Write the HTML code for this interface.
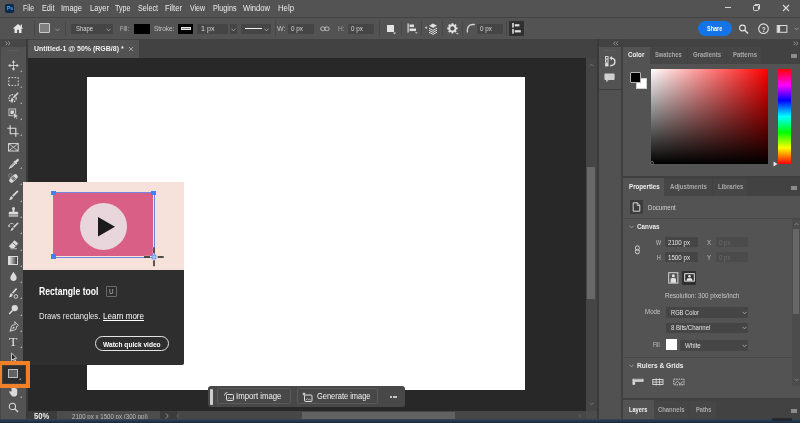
<!DOCTYPE html>
<html lang="en"><head><meta charset="utf-8"><title>Photoshop - Rectangle tool</title>
<style>
html,body{margin:0;padding:0}
body{width:800px;height:423px;overflow:hidden;background:#535353;position:relative;font-family:"Liberation Sans", sans-serif}
.a{position:absolute}
.t{position:absolute;white-space:nowrap;line-height:1;transform-origin:0 50%}
</style></head><body><div id="app" style="position:absolute;left:0;top:0;width:800px;height:423px;will-change:transform">
<div class="a" style="left:0px;top:0px;width:800px;height:17px;background:#535353;"></div>
<div class="a" style="left:0px;top:16.8px;width:800px;height:1.2px;background:#444444;"></div>
<div class="a" style="left:5px;top:4px;width:9px;height:9px;background:#0b2a4d;border-radius:2px;"></div>
<div class="t" style="left:6.6px;top:5.25px;font-size:6px;font-weight:700;color:#4fb0ff;transform:scaleX(0.8170);">Ps</div>
<div class="t" style="left:23px;top:4.00px;font-size:8.5px;font-weight:400;color:#ececec;transform:scaleX(0.8027);">File</div>
<div class="t" style="left:41.5px;top:4.00px;font-size:8.5px;font-weight:400;color:#ececec;transform:scaleX(0.8529);">Edit</div>
<div class="t" style="left:61px;top:4.00px;font-size:8.5px;font-weight:400;color:#ececec;transform:scaleX(0.8889);">Image</div>
<div class="t" style="left:90px;top:4.00px;font-size:8.5px;font-weight:400;color:#ececec;transform:scaleX(0.8935);">Layer</div>
<div class="t" style="left:115px;top:4.00px;font-size:8.5px;font-weight:400;color:#ececec;transform:scaleX(0.8407);">Type</div>
<div class="t" style="left:138px;top:4.00px;font-size:8.5px;font-weight:400;color:#ececec;transform:scaleX(0.8466);">Select</div>
<div class="t" style="left:165px;top:4.00px;font-size:8.5px;font-weight:400;color:#ececec;transform:scaleX(0.8999);">Filter</div>
<div class="t" style="left:190px;top:4.00px;font-size:8.5px;font-weight:400;color:#ececec;transform:scaleX(0.8205);">View</div>
<div class="t" style="left:212.5px;top:4.00px;font-size:8.5px;font-weight:400;color:#ececec;transform:scaleX(0.8426);">Plugins</div>
<div class="t" style="left:243px;top:4.00px;font-size:8.5px;font-weight:400;color:#ececec;transform:scaleX(0.8930);">Window</div>
<div class="t" style="left:278px;top:4.00px;font-size:8.5px;font-weight:400;color:#ececec;transform:scaleX(0.9151);">Help</div>
<div class="a" style="left:724.5px;top:6.9px;width:6.3px;height:1px;background:#d4d4d4;"></div>
<svg class="a" style="left:752px;top:3px;" width="9" height="9" viewBox="0 0 9 9"><rect x="1.5" y="2.5" width="5" height="5" rx="1" fill="none" stroke="#d8d8d8" stroke-width="1"/><path d="M3 2.5V1.5h4.5v4.5h-1" fill="none" stroke="#d8d8d8" stroke-width="1"/></svg>
<svg class="a" style="left:782px;top:4px;" width="8" height="8" viewBox="0 0 8 8"><path d="M1 1l6 6M7 1l-6 6" stroke="#dcdcdc" stroke-width="1.1" fill="none"/></svg>
<div class="a" style="left:0px;top:18px;width:800px;height:21px;background:#535353;"></div>
<div class="a" style="left:0px;top:38.5px;width:800px;height:1px;background:#3f3f3f;"></div>
<svg class="a" style="left:12px;top:23px;" width="12" height="11" viewBox="0 0 12 11"><path d="M6 1L0.8 5.6h1.7V10h2.6V6.8h1.8V10h2.6V5.6h1.7z" fill="#e6e6e6"/><rect x="8.6" y="1.6" width="1.3" height="3" fill="#e6e6e6"/></svg>
<div class="a" style="left:34px;top:21px;width:1px;height:15px;background:#464646;"></div>
<div class="a" style="left:39px;top:23px;width:9px;height:8px;background:#808080;border:1px solid #c9c9c9;border-radius:1px"></div>
<svg class="a" style="left:55px;top:27.5px;" width="5" height="4" viewBox="0 0 5 4"><path d="M0.5 0.8l2 2 2-2" stroke="#a0a0a0" stroke-width="0.9" fill="none"/></svg>
<div class="a" style="left:65px;top:21px;width:1px;height:15px;background:#464646;"></div>
<div class="a" style="left:71px;top:24px;width:42px;height:10px;background:#454545;border-radius:1px"></div>
<div class="t" style="left:76px;top:25.00px;font-size:7.5px;font-weight:400;color:#d6d6d6;transform:scaleX(0.7839);">Shape</div>
<svg class="a" style="left:106px;top:27.5px;" width="5" height="4" viewBox="0 0 5 4"><path d="M0.5 0.8l2 2 2-2" stroke="#a8a8a8" stroke-width="0.9" fill="none"/></svg>
<div class="t" style="left:120px;top:25.00px;font-size:7.5px;font-weight:400;color:#b8b8b8;transform:scaleX(0.7711);">Fill:</div>
<div class="a" style="left:133.5px;top:24px;width:16px;height:9.5px;background:#000;"></div>
<div class="t" style="left:154px;top:25.00px;font-size:7.5px;font-weight:400;color:#c4c4c4;transform:scaleX(0.8626);">Stroke:</div>
<div class="a" style="left:178px;top:24px;width:15px;height:9.5px;background:#000;"></div>
<div class="a" style="left:181px;top:26.600px;width:8.200px;height:1.600px;border:1px solid #e8e8e8;background:#8a8a8a;border-radius:0.500px;box-sizing:content-box"></div>
<div class="a" style="left:197px;top:24px;width:30.5px;height:10px;background:#454545;border-radius:1px"></div>
<div class="t" style="left:201px;top:25.00px;font-size:7.5px;font-weight:400;color:#d6d6d6;transform:scaleX(0.9515);">1 px</div>
<div class="a" style="left:229.5px;top:24px;width:7px;height:10px;background:#454545;border-radius:1px"></div>
<svg class="a" style="left:230.5px;top:27.5px;" width="5" height="4" viewBox="0 0 5 4"><path d="M0.5 0.8l2 2 2-2" stroke="#a8a8a8" stroke-width="0.9" fill="none"/></svg>
<div class="a" style="left:241px;top:24px;width:29.5px;height:10px;background:#454545;border-radius:1px"></div>
<div class="a" style="left:244.5px;top:28px;width:17.5px;height:1.3px;background:#f0f0f0;"></div>
<svg class="a" style="left:264px;top:27.5px;" width="5" height="4" viewBox="0 0 5 4"><path d="M0.5 0.8l2 2 2-2" stroke="#a8a8a8" stroke-width="0.9" fill="none"/></svg>
<div class="a" style="left:274.5px;top:21px;width:1px;height:15px;background:#464646;"></div>
<div class="t" style="left:277px;top:25.00px;font-size:7.5px;font-weight:400;color:#c4c4c4;transform:scaleX(0.9412);">W:</div>
<div class="a" style="left:288px;top:24px;width:26px;height:10px;background:#454545;border-radius:1px"></div>
<div class="t" style="left:291px;top:25.00px;font-size:7.5px;font-weight:400;color:#d6d6d6;transform:scaleX(0.8458);">0 px</div>
<svg class="a" style="left:320px;top:26px;" width="10" height="6" viewBox="0 0 10 6"><rect x="0.6" y="1" width="4.6" height="3.6" rx="1.8" fill="none" stroke="#bdbdbd" stroke-width="1"/><rect x="4.6" y="1" width="4.6" height="3.6" rx="1.8" fill="none" stroke="#bdbdbd" stroke-width="1"/></svg>
<div class="t" style="left:338px;top:25.00px;font-size:7.5px;font-weight:400;color:#a0a0a0;transform:scaleX(0.8667);">H:</div>
<div class="a" style="left:348px;top:24px;width:25.5px;height:10px;background:#454545;border-radius:1px"></div>
<div class="t" style="left:351px;top:25.00px;font-size:7.5px;font-weight:400;color:#d6d6d6;transform:scaleX(0.8458);">0 px</div>
<div class="a" style="left:379px;top:21px;width:1px;height:15px;background:#464646;"></div>
<div class="a" style="left:387px;top:25px;width:6.5px;height:6.5px;background:#e4e4e4;"></div>
<svg class="a" style="left:393px;top:32px;" width="3" height="3" viewBox="0 0 3 3"><path d="M0 0.5h3L1.5 2.6z" fill="#d0d0d0"/></svg>
<div class="a" style="left:401px;top:21px;width:1px;height:15px;background:#464646;"></div>
<svg class="a" style="left:407px;top:23px;" width="11" height="11" viewBox="0 0 11 11"><rect x="0.5" y="0.5" width="1.2" height="9" fill="#dedede"/><rect x="2.5" y="1.5" width="4.5" height="2.6" fill="#dedede"/><rect x="2.5" y="5.5" width="6.5" height="2.6" fill="#dedede"/><path d="M8 9.3h2.6L9.3 10.8z" fill="#d0d0d0"/></svg>
<div class="a" style="left:420.5px;top:21px;width:1px;height:15px;background:#464646;"></div>
<svg class="a" style="left:425px;top:23px;" width="13" height="12" viewBox="0 0 13 12"><path d="M1.2 3.4v2.4M0 4.6h2.4" stroke="#d8d8d8" stroke-width="0.8"/><path d="M8 0.6l4 2.2-4 2.2-4-2.2z" fill="#dedede"/><path d="M4 5.2l4 2.2 4-2.2M4 7.2l4 2.2 4-2.2M4 9.2l4 2.2 4-2.2" stroke="#dedede" stroke-width="1" fill="none"/></svg>
<div class="a" style="left:442px;top:21px;width:1px;height:15px;background:#464646;"></div>
<svg class="a" style="left:447px;top:23px;" width="12" height="12" viewBox="0 0 12 12"><g transform="translate(5.4,5.4)"><circle r="3.2" fill="none" stroke="#e2e2e2" stroke-width="2"/><g stroke="#e2e2e2" stroke-width="1.7"><path d="M0-5.2V-3M0 5.2V3M-5.2 0H-3M5.2 0H3M-3.7-3.7l1.5 1.5M3.7 3.7l-1.5-1.5M-3.7 3.7l1.5-1.5M3.7-3.7l-1.5 1.5"/></g></g><path d="M9 10h2.6L10.3 11.6z" fill="#d0d0d0"/></svg>
<div class="a" style="left:462px;top:21px;width:1px;height:15px;background:#464646;"></div>
<svg class="a" style="left:466px;top:23px;" width="10" height="10" viewBox="0 0 10 10"><path d="M1.4 9.5V6.5a5 5 0 0 1 5-5h2.4" fill="none" stroke="#d4d4d4" stroke-width="1.3"/></svg>
<div class="a" style="left:477px;top:24px;width:25.5px;height:10px;background:#454545;border-radius:1px"></div>
<div class="t" style="left:480px;top:25.00px;font-size:7.5px;font-weight:400;color:#d6d6d6;transform:scaleX(0.8458);">0 px</div>
<div class="a" style="left:506px;top:21px;width:1px;height:15px;background:#464646;"></div>
<div class="a" style="left:509px;top:21px;width:14.5px;height:15px;background:#303030;border-radius:1px"></div>
<svg class="a" style="left:510.5px;top:22px;" width="12" height="13" viewBox="0 0 12 13"><rect x="1.2" y="1" width="1.6" height="4.6" fill="#e2e2e2"/><rect x="3.8" y="2.2" width="4.6" height="2.2" fill="#e2e2e2"/><rect x="1.2" y="7" width="1.6" height="4.6" fill="#e2e2e2"/><rect x="3.8" y="8.2" width="6" height="2.2" fill="#e2e2e2"/></svg>
<div class="a" style="left:698.3px;top:21.2px;width:33.7px;height:14.8px;background:#1473e6;border-radius:7.5px"></div>
<div class="t" style="left:706.8px;top:25.00px;font-size:7.5px;font-weight:700;color:#ffffff;transform:scaleX(0.7287);">Share</div>
<svg class="a" style="left:738px;top:23px;" width="12" height="12" viewBox="0 0 12 12"><circle cx="4.5" cy="5" r="2.900" fill="none" stroke="#e4e4e4" stroke-width="1.100"/><path d="M6.700 7.200l3.300 3.300" stroke="#e4e4e4" stroke-width="1.400"/></svg>
<svg class="a" style="left:757px;top:22px;" width="13" height="13" viewBox="0 0 13 13"><circle cx="6.500" cy="6.700" r="4.800" fill="none" stroke="#e4e4e4" stroke-width="1.100"/></svg>
<div class="t" style="left:761.8px;top:25.75px;font-size:8px;font-weight:700;color:#e8e8e8;transform:scaleX(0.7361);">?</div>
<svg class="a" style="left:776px;top:24px;" width="12" height="10" viewBox="0 0 12 10"><rect x="1.200" y="1.500" width="9.700" height="6.800" fill="none" stroke="#dcdcdc" stroke-width="1"/><rect x="1.500" y="1.800" width="2.600" height="6.200" fill="#dcdcdc"/></svg>
<svg class="a" style="left:793.5px;top:27.3px;" width="5" height="4" viewBox="0 0 5 4"><path d="M0.5 0.8l2 2 2-2" stroke="#a0a0a0" stroke-width="0.9" fill="none"/></svg>
<div class="a" style="left:0px;top:39px;width:800px;height:18.5px;background:#424242;"></div>
<div class="a" style="left:28px;top:40px;width:110.5px;height:17.5px;background:#535353;"></div>
<div class="t" style="left:33.8px;top:44.75px;font-size:8px;font-weight:700;color:#f0f0f0;transform:scaleX(0.8753);">Untitled-1 @ 50% (RGB/8) *</div>
<svg class="a" style="left:127.5px;top:45.5px;" width="6" height="6" viewBox="0 0 6 6"><path d="M1 1l4 4M5 1l-4 4" stroke="#a8a8a8" stroke-width="0.9" fill="none"/></svg>
<div class="a" style="left:27px;top:57.5px;width:560px;height:353px;background:#282828;"></div>
<div class="a" style="left:87.2px;top:77.2px;width:438.3px;height:312.6px;background:#ffffff;"></div>
<div class="a" style="left:586px;top:57.5px;width:11px;height:353px;background:#454545;"></div>
<div class="a" style="left:587.2px;top:167px;width:8.3px;height:131.5px;background:#686868;"></div>
<svg class="a" style="left:589px;top:62.5px;" width="5" height="4" viewBox="0 0 5 4"><path d="M0.5 3.2l2-2 2 2" stroke="#7a7a7a" stroke-width="0.9" fill="none"/></svg>
<svg class="a" style="left:589px;top:402px;" width="5" height="4" viewBox="0 0 5 4"><path d="M0.5 0.8l2 2 2-2" stroke="#7a7a7a" stroke-width="0.9" fill="none"/></svg>
<div class="a" style="left:597px;top:39px;width:1.5px;height:381px;background:#3a3a3a;"></div>
<div class="a" style="left:27px;top:410.5px;width:570px;height:9.5px;background:#474747;"></div>
<div class="a" style="left:27px;top:410.5px;width:30px;height:9.5px;background:#3c3c3c;"></div>
<div class="a" style="left:57px;top:410.5px;width:103px;height:9.5px;background:#4c4c4c;"></div>
<div class="a" style="left:160px;top:410.5px;width:16.5px;height:9.5px;background:#3c3c3c;"></div>
<div class="t" style="left:34.2px;top:412.00px;font-size:8.5px;font-weight:700;color:#ededed;transform:scaleX(0.8992);">50%</div>
<div class="t" style="left:72.4px;top:413.00px;font-size:7.5px;font-weight:400;color:#bdbdbd;transform:scaleX(0.8163);">2100 px x 1500 px (300 ppi)</div>
<svg class="a" style="left:165px;top:412.5px;" width="4" height="6" viewBox="0 0 4 6"><path d="M0.8 0.5l2.4 2.5-2.4 2.5" stroke="#9a9a9a" stroke-width="0.9" fill="none"/></svg>
<svg class="a" style="left:176px;top:413.5px;" width="3" height="4" viewBox="0 0 3 4"><path d="M2.4 0.5L0.8 2l1.6 1.5" stroke="#6e6e6e" stroke-width="0.8" fill="none"/></svg>
<div class="a" style="left:302px;top:411.5px;width:153px;height:8.5px;background:#626262;"></div>
<div class="a" style="left:586px;top:410.5px;width:11px;height:9.5px;background:#4c4c4c;"></div>
<svg class="a" style="left:578px;top:413.5px;" width="3" height="4" viewBox="0 0 3 4"><path d="M0.8 0.5L2.4 2 0.8 3.5" stroke="#6e6e6e" stroke-width="0.8" fill="none"/></svg>
<div class="a" style="left:0px;top:39px;width:25.5px;height:381px;background:#535353;"></div>
<div class="a" style="left:0px;top:39px;width:1px;height:381px;background:#474747;"></div>
<div class="a" style="left:0px;top:39px;width:25.5px;height:7.5px;background:#474747;"></div>
<div class="a" style="left:25.5px;top:39px;width:2px;height:381px;background:#3a3a3a;"></div>
<svg class="a" style="left:4.5px;top:41px;" width="6" height="5" viewBox="0 0 6 5"><path d="M0.6 0.6l1.8 1.8-1.8 1.8M3.2 0.6l1.8 1.8-1.8 1.8" stroke="#b0b0b0" stroke-width="0.8" fill="none"/></svg>
<div class="a" style="left:7px;top:50px;width:11px;height:1px;background:#5d5d5d;"></div>
<svg class="a" style="left:7.5px;top:60.3px;" width="11" height="11" viewBox="0 0 14 14"><path d="M7 2v10M2 7h10" stroke="#dadada" stroke-width="1.100"/><path d="M7 0.200l2.300 2.900H4.700zM7 13.800l2.300-2.900H4.700zM0.200 7l2.900-2.300v4.600zM13.800 7l-2.900-2.300v4.600z" fill="#dadada"/></svg>
<svg class="a" style="left:19.8px;top:70.0px;" width="2" height="2" viewBox="0 0 2 2"><path d="M2 0v2H0z" fill="#a8a8a8"/></svg>
<svg class="a" style="left:7.5px;top:76.0px;" width="11" height="11" viewBox="0 0 14 14"><path d="M1 3.800V2h1.800M4.600 2h2M8.400 2h2M12.200 2H13v1.800M13 5.600v2M13 9.400V12h-0.800M10.400 12h-2M6.600 12h-2M2.800 12H1v-2.600M1 7.600v-2" fill="none" stroke="#dadada" stroke-width="1.200"/></svg>
<svg class="a" style="left:19.8px;top:85.7px;" width="2" height="2" viewBox="0 0 2 2"><path d="M2 0v2H0z" fill="#a8a8a8"/></svg>
<svg class="a" style="left:7.5px;top:92.1px;" width="11" height="11" viewBox="0 0 14 14"><circle cx="5.800" cy="8" r="4.600" fill="none" stroke="#dadada" stroke-width="1.500" stroke-dasharray="2 1.300"/><path d="M13.200 0.600c0.700 0.700 0.300 1.400-0.200 1.900L7.600 8.400 5.800 6.600 11.300 0.900c0.600-0.600 1.300-0.900 1.900-0.300z" fill="#dadada" stroke="#535353" stroke-width="0.500"/><path d="M5.200 7.400l1.800 1.800c0 1.800-1.400 3.200-4.200 3 0.900-0.800 0.900-1.600 1-2.600 0.100-1 0.600-1.900 1.400-2.200z" fill="#dadada"/></svg>
<svg class="a" style="left:19.8px;top:101.8px;" width="2" height="2" viewBox="0 0 2 2"><path d="M2 0v2H0z" fill="#a8a8a8"/></svg>
<svg class="a" style="left:7.5px;top:108.3px;" width="11" height="11" viewBox="0 0 14 14"><rect x="1.200" y="1.200" width="8.600" height="8.600" fill="none" stroke="#dadada" stroke-width="1"/><rect x="3.200" y="3.200" width="4.600" height="4.600" fill="#dadada"/><path d="M7 6.200l6.400 4.400-2.700 0.400 1.500 2.600-1.200 0.700-1.500-2.600-1.900 1.900z" fill="#dadada" stroke="#535353" stroke-width="0.600"/></svg>
<svg class="a" style="left:19.8px;top:118.0px;" width="2" height="2" viewBox="0 0 2 2"><path d="M2 0v2H0z" fill="#a8a8a8"/></svg>
<svg class="a" style="left:7px;top:124.5px;" width="12" height="12" viewBox="0 0 12 12"><path d="M3.200 0.300v8.500h8.500M0.300 3.200h8.500v8.500" fill="none" stroke="#dadada" stroke-width="1.100"/></svg>
<svg class="a" style="left:19.8px;top:134.2px;" width="2" height="2" viewBox="0 0 2 2"><path d="M2 0v2H0z" fill="#a8a8a8"/></svg>
<svg class="a" style="left:8px;top:142.5px;" width="11" height="9" viewBox="0 0 11 9"><rect x="0.600" y="0.600" width="9.600" height="7.400" fill="none" stroke="#dadada" stroke-width="1"/><path d="M0.600 0.600l9.600 7.400M10.200 0.600l-9.600 7.400" stroke="#dadada" stroke-width="0.800"/></svg>
<svg class="a" style="left:7.5px;top:157.5px;" width="11" height="11" viewBox="0 0 14 14"><path d="M11.900 0.700a1.900 1.900 0 0 1 1.400 3.200L11 6.200l0.700 0.700-1 1-0.700-0.700-5.200 5.200-2.300 0.800-0.900 0.900-0.700-0.700 0.900-0.900 0.800-2.300 5.200-5.200-0.700-0.700 1-1 0.700 0.700 2.200-2.200a1.900 1.900 0 0 1 0.900-0.600z" fill="#dadada"/><path d="M8.300 5.700L3.600 10.400l-0.300 0.800 0.800-0.300 4.700-4.700z" fill="#535353"/></svg>
<svg class="a" style="left:19.8px;top:167.2px;" width="2" height="2" viewBox="0 0 2 2"><path d="M2 0v2H0z" fill="#a8a8a8"/></svg>
<svg class="a" style="left:7.5px;top:173.0px;" width="11" height="11" viewBox="0 0 14 14"><g transform="rotate(-45 7 7)"><rect x="0.500" y="4" width="13" height="6" rx="3" fill="#dadada"/><rect x="5" y="4.800" width="4" height="4.400" fill="#535353"/><circle cx="6.200" cy="6.200" r="0.500" fill="#dadada"/><circle cx="7.800" cy="6.200" r="0.500" fill="#dadada"/><circle cx="6.200" cy="7.800" r="0.500" fill="#dadada"/><circle cx="7.800" cy="7.800" r="0.500" fill="#dadada"/></g><circle cx="3" cy="3.200" r="2.300" fill="none" stroke="#dadada" stroke-width="0.800" stroke-dasharray="1.200 1"/></svg>
<svg class="a" style="left:19.8px;top:182.7px;" width="2" height="2" viewBox="0 0 2 2"><path d="M2 0v2H0z" fill="#a8a8a8"/></svg>
<svg class="a" style="left:7.5px;top:190.1px;" width="11" height="11" viewBox="0 0 14 14"><path d="M12.800 0.800c0.800 0.800 0.300 1.500-0.300 2.100L6.800 8.600 5.200 7 10.900 1.300c0.600-0.600 1.300-1.100 1.900-0.500z" fill="#dadada"/><path d="M4.500 7.800l1.700 1.700c0 2-1.700 3.400-5 3.200 1.300-0.800 1.300-1.800 1.500-3 0.200-1 0.900-1.700 1.800-1.900z" fill="#dadada"/></svg>
<svg class="a" style="left:19.8px;top:199.79999999999998px;" width="2" height="2" viewBox="0 0 2 2"><path d="M2 0v2H0z" fill="#a8a8a8"/></svg>
<svg class="a" style="left:7.5px;top:206.5px;" width="11" height="11" viewBox="0 0 14 14"><path d="M5.300 1.200a1.900 1.900 0 0 1 3.400 0c0.400 0.900 0 1.800-0.400 2.600-0.400 0.900-0.300 2 0.400 2.400h3.300c0.600 0 1 0.400 1 1v2.300H1V7.200c0-0.600 0.400-1 1-1h3.300c0.700-0.400 0.800-1.500 0.400-2.400-0.400-0.800-0.800-1.700-0.400-2.600z" fill="#dadada"/><rect x="1" y="10.600" width="12" height="1.600" fill="#dadada"/></svg>
<svg class="a" style="left:19.8px;top:216.2px;" width="2" height="2" viewBox="0 0 2 2"><path d="M2 0v2H0z" fill="#a8a8a8"/></svg>
<svg class="a" style="left:7.5px;top:222.0px;" width="11" height="11" viewBox="0 0 14 14"><path d="M13 0.800c0.700 0.700 0.200 1.400-0.300 1.900L7.800 7.600 6.400 6.200l4.900-4.900c0.500-0.500 1.100-1 1.700-0.500z" fill="#dadada"/><path d="M5.800 7l1.400 1.400c0 1.700-1.400 2.900-4.200 2.700 1.100-0.700 1.100-1.500 1.300-2.500 0.100-0.800 0.700-1.400 1.500-1.600z" fill="#dadada"/><path d="M1 5.500a3.600 3.600 0 0 1 6-2.800" fill="none" stroke="#dadada" stroke-width="1"/><path d="M0 4.200l1 2.400 2-1.600z" fill="#dadada"/></svg>
<svg class="a" style="left:19.8px;top:231.7px;" width="2" height="2" viewBox="0 0 2 2"><path d="M2 0v2H0z" fill="#a8a8a8"/></svg>
<svg class="a" style="left:7.5px;top:239.1px;" width="11" height="11" viewBox="0 0 14 14"><path d="M8.200 1.500l4.800 4.200-5 5.800H3.500L1 9.300z" fill="#dadada"/><path d="M5.600 4.500l4.800 4.200" stroke="#535353" stroke-width="1"/><rect x="3" y="12" width="8.500" height="1" fill="#dadada"/></svg>
<svg class="a" style="left:19.8px;top:248.79999999999998px;" width="2" height="2" viewBox="0 0 2 2"><path d="M2 0v2H0z" fill="#a8a8a8"/></svg>
<div class="a" style="left:7.8px;top:256px;width:8.4px;height:7.4px;border:0.8px solid #dadada;background:linear-gradient(90deg,#e8e8e8,#3a3a3a);box-sizing:content-box"></div>
<svg class="a" style="left:19.8px;top:264.7px;" width="2" height="2" viewBox="0 0 2 2"><path d="M2 0v2H0z" fill="#a8a8a8"/></svg>
<svg class="a" style="left:7.5px;top:271.0px;" width="11" height="11" viewBox="0 0 14 14"><path d="M7 1C9 4 11 6.300 11 8.600A4 4 0 0 1 3 8.600C3 6.300 5 4 7 1z" fill="#dadada"/></svg>
<svg class="a" style="left:19.8px;top:280.7px;" width="2" height="2" viewBox="0 0 2 2"><path d="M2 0v2H0z" fill="#a8a8a8"/></svg>
<svg class="a" style="left:7.5px;top:287.5px;" width="11" height="11" viewBox="0 0 14 14"><path d="M11 0.600c0.800 0.800 0.300 1.500-0.300 2.100L6.500 7.400 5 5.900 9.200 1.100c0.600-0.600 1.200-1.100 1.800-0.500z" fill="#dadada"/><path d="M4.300 6.600l1.700 1.700c0 2-1.700 3.600-5 3.400 1.300-0.800 1.300-1.800 1.500-3 0.200-1 0.900-1.900 1.800-2.100z" fill="#dadada"/><circle cx="10" cy="10.800" r="2.300" fill="none" stroke="#dadada" stroke-width="1.200"/></svg>
<svg class="a" style="left:19.8px;top:297.2px;" width="2" height="2" viewBox="0 0 2 2"><path d="M2 0v2H0z" fill="#a8a8a8"/></svg>
<svg class="a" style="left:7.5px;top:304.0px;" width="11" height="11" viewBox="0 0 14 14"><circle cx="8.600" cy="5.200" r="4" fill="#dadada"/><path d="M6 8l-4.500 4.800" stroke="#dadada" stroke-width="1.800"/></svg>
<svg class="a" style="left:19.8px;top:313.7px;" width="2" height="2" viewBox="0 0 2 2"><path d="M2 0v2H0z" fill="#a8a8a8"/></svg>
<svg class="a" style="left:7.5px;top:320.5px;" width="11" height="11" viewBox="0 0 14 14"><path d="M8.500 0.800l4.700 4.700-1.200 1.200-0.800-0.300-1.200 4.400-7.500 2.400 2.400-7.500 4.400-1.200-0.300-0.800z" fill="none" stroke="#dadada" stroke-width="1.100"/><path d="M2.800 12.800l3.700-3.700" stroke="#dadada" stroke-width="0.900"/><circle cx="7.200" cy="8.300" r="1.100" fill="#dadada"/></svg>
<svg class="a" style="left:19.8px;top:330.2px;" width="2" height="2" viewBox="0 0 2 2"><path d="M2 0v2H0z" fill="#a8a8a8"/></svg>
<svg class="a" style="left:6px;top:334px;" width="14" height="16" viewBox="0 0 14 16"></svg>
<div class="t" style="left:9px;top:335.25px;font-size:13px;font-weight:400;color:#e0e0e0;transform:scaleX(1.0562);font-family:&quot;Liberation Serif&quot;,serif;">T</div>
<svg class="a" style="left:19.8px;top:346.2px;" width="2" height="2" viewBox="0 0 2 2"><path d="M2 0v2H0z" fill="#a8a8a8"/></svg>
<svg class="a" style="left:7.5px;top:352.0px;" width="11" height="11" viewBox="0 0 14 14"><path d="M4.500 1.500l6.500 6.300-3 0.200 1.900 3.700-1.300 0.700-1.900-3.700-2.200 2z" fill="#1e1e1e" stroke="#e4e4e4" stroke-width="1.100" stroke-linejoin="round"/></svg>
<div class="a" style="left:2px;top:365px;width:24px;height:19px;background:#3e3e3e;z-index:5"></div>
<div class="a" style="left:3.3px;top:366.2px;width:21.5px;height:16.7px;background:#2e2e2e;z-index:5"></div>
<div class="a" style="left:8px;top:369.200px;width:10.100px;height:8.700px;background:#626262;border:0.900px solid #bcbcbc;box-sizing:border-box;z-index:6"></div>
<svg class="a" style="left:19.4px;top:378.3px;z-index:6;" width="2" height="2" viewBox="0 0 2 2"><path d="M2 0v2H0z" fill="#a8a8a8"/></svg>
<div class="a" style="left:-1.600px;top:361.400px;width:31.600px;height:26.500px;border:4.100px solid #f0812a;box-sizing:border-box;z-index:7"></div>
<svg class="a" style="left:7.5px;top:386.0px;" width="11" height="11" viewBox="0 0 14 14"><path d="M4.500 7V2.800a0.900 0.900 0 0 1 1.800 0V6.500 1.800a0.900 0.900 0 0 1 1.800 0V6.500 2.500a0.900 0.900 0 0 1 1.800 0V7 4.200a0.900 0.900 0 0 1 1.800 0V9.500c0 2.500-1.500 4-4 4-2 0-3-0.800-4-2.500L1.600 8c-0.500-0.900 0.600-1.700 1.400-0.900z" fill="#dadada"/></svg>
<svg class="a" style="left:19.8px;top:395.7px;" width="2" height="2" viewBox="0 0 2 2"><path d="M2 0v2H0z" fill="#a8a8a8"/></svg>
<svg class="a" style="left:7.5px;top:401.5px;" width="11" height="11" viewBox="0 0 14 14"><circle cx="5.600" cy="5.600" r="4" fill="none" stroke="#dadada" stroke-width="1.300"/><path d="M8.600 8.600l4.200 4.200" stroke="#dadada" stroke-width="1.600"/></svg>
<div class="a" style="left:23.3px;top:182px;width:160.4px;height:87.7px;background:#f6e1db;"></div>
<div class="a" style="left:23.3px;top:269.7px;width:160.4px;height:95.8px;background:#2e2e2e;border-radius:0 0 2px 2px"></div>
<div class="a" style="left:53.3px;top:192.7px;width:100.2px;height:63.6px;background:#d95f87;"></div>
<div class="a" style="left:52.600px;top:192.200px;width:100.100px;height:63.400px;border:1.200px solid #6f86e2;box-sizing:content-box"></div>
<div class="a" style="left:80px;top:202.500px;width:47px;height:47px;border-radius:50%;background:#e9d6dd"></div>
<svg class="a" style="left:96px;top:214.5px;" width="22" height="24" viewBox="0 0 22 24"><path d="M2 2l17 9.800L2 21.600z" fill="#1d1a1c"/></svg>
<div class="a" style="left:51.1px;top:190.5px;width:4.8px;height:4.8px;background:#4280f4;"></div>
<div class="a" style="left:151.2px;top:190.5px;width:4.8px;height:4.8px;background:#4280f4;"></div>
<div class="a" style="left:51.1px;top:253.9px;width:4.8px;height:4.8px;background:#4280f4;"></div>
<svg class="a" style="left:142.2px;top:244.7px;" width="24" height="24" viewBox="0 0 24 24"><path d="M12 2.300v6M12 15.300v6M2 12h6M15.700 12h6" stroke="#f6e1db" stroke-width="2.600" opacity="0.700"/><path d="M12 2.300v6M12 15.300v6M2 12h6M15.700 12h6" stroke="#1c1c1c" stroke-width="1.400"/><rect x="10.200" y="10.200" width="3.600" height="3.600" fill="#d4e6ff" stroke="#5a9cf0" stroke-width="1"/><rect x="11.600" y="11.600" width="0.800" height="0.800" fill="#223"/></svg>
<div class="t" style="left:38.7px;top:286.75px;font-size:10px;font-weight:700;color:#ffffff;transform:scaleX(0.8635);">Rectangle tool</div>
<div class="a" style="left:106.200px;top:286px;width:8.800px;height:8.800px;border:1px solid #6a6a6a;border-radius:1px;box-sizing:content-box"></div>
<div class="t" style="left:109.2px;top:288.25px;font-size:7px;font-weight:700;color:#909090;transform:scaleX(0.8889);">U</div>
<div class="t" style="left:38.7px;top:312.00px;font-size:8.5px;font-weight:400;color:#e6e6e6;transform:scaleX(0.9011);">Draws rectangles.</div>
<div class="t" style="left:103px;top:312.00px;font-size:8.5px;font-weight:400;color:#ffffff;transform:scaleX(0.9432);text-decoration:underline;text-decoration-thickness:0.700px;text-underline-offset:1px;">Learn more</div>
<div class="a" style="left:95px;top:336.200px;width:71.600px;height:12.600px;border:1.100px solid #e4e4e4;border-radius:8px;box-sizing:content-box"></div>
<div class="t" style="left:103px;top:340.75px;font-size:8px;font-weight:700;color:#ffffff;transform:scaleX(0.8236);">Watch quick video</div>
<div class="a" style="left:207.6px;top:386.3px;width:197px;height:21.2px;background:#484848;border-radius:3px"></div>
<div class="a" style="left:210.3px;top:388.6px;width:2.3px;height:16.2px;background:#cfcfcf;border-radius:1px"></div>
<div class="a" style="left:217.2px;top:388.3px;width:74.3px;height:16.2px;background:#484848;border-radius:2px;border:1px solid #5b5b5b;box-sizing:border-box"></div>
<div class="a" style="left:296.5px;top:388.3px;width:81.7px;height:16.2px;background:#484848;border-radius:2px;border:1px solid #5b5b5b;box-sizing:border-box"></div>
<svg class="a" style="left:223.5px;top:392px;" width="10" height="9" viewBox="0 0 10 9"><rect x="2.500" y="2.500" width="7" height="6" rx="1" fill="none" stroke="#e0e0e0" stroke-width="1"/><path d="M3.500 7.500l1.800-2 1.400 1.400 1-0.800 1.300 1.400" fill="none" stroke="#e0e0e0" stroke-width="0.700"/><path d="M0.500 3.500a3 3 0 0 1 3-3" fill="none" stroke="#e0e0e0" stroke-width="0.900"/></svg>
<div class="t" style="left:236px;top:392.00px;font-size:8.5px;font-weight:400;color:#f2f2f2;transform:scaleX(0.9151);">Import image</div>
<svg class="a" style="left:302px;top:391.5px;" width="11" height="10" viewBox="0 0 11 10"><rect x="2.500" y="3" width="7.500" height="6.500" rx="1" fill="none" stroke="#e0e0e0" stroke-width="1"/><path d="M3.500 8.500l1.800-2 1.400 1.400 1-0.800 1.300 1.400" fill="none" stroke="#e0e0e0" stroke-width="0.700"/><path d="M2 0l0.600 1.400L4 2l-1.400 0.600L2 4l-0.600-1.400L0 2l1.400-0.600z" fill="#f0f0f0"/></svg>
<div class="t" style="left:317px;top:392.00px;font-size:8.5px;font-weight:400;color:#f2f2f2;transform:scaleX(0.8777);">Generate image</div>
<div class="a" style="left:389.7px;top:395.800px;width:2px;height:2px;border-radius:50%;background:#ececec"></div>
<div class="a" style="left:392.55px;top:395.800px;width:2px;height:2px;border-radius:50%;background:#ececec"></div>
<div class="a" style="left:395.4px;top:395.800px;width:2px;height:2px;border-radius:50%;background:#ececec"></div>
<div class="a" style="left:598.5px;top:39px;width:201.5px;height:7.5px;background:#424242;"></div>
<svg class="a" style="left:612.5px;top:41px;" width="6" height="5" viewBox="0 0 6 5"><path d="M2.400 0.600L0.600 2.400l1.800 1.800M5 0.600L3.200 2.400 5 4.200" stroke="#a8a8a8" stroke-width="0.800" fill="none"/></svg>
<svg class="a" style="left:792.5px;top:41px;" width="6" height="5" viewBox="0 0 6 5"><path d="M0.600 0.600l1.800 1.800-1.800 1.800M3.200 0.600l1.800 1.800-1.800 1.800" stroke="#a8a8a8" stroke-width="0.800" fill="none"/></svg>
<div class="a" style="left:598.5px;top:46.5px;width:22.5px;height:42.5px;background:#535353;"></div>
<div class="a" style="left:598.5px;top:89px;width:22.5px;height:1px;background:#3e3e3e;"></div>
<div class="a" style="left:598.5px;top:90px;width:22.5px;height:330px;background:#515151;"></div>
<div class="a" style="left:621px;top:39px;width:2px;height:381px;background:#404040;"></div>
<div class="a" style="left:604px;top:50px;width:11px;height:1px;background:#5d5d5d;"></div>
<svg class="a" style="left:604.5px;top:55.5px;" width="11" height="11" viewBox="0 0 11 11"><rect x="0.500" y="0.500" width="2.600" height="2.400" fill="none" stroke="#d8d8d8" stroke-width="0.900"/><rect x="0.500" y="3.800" width="2.600" height="2.400" fill="none" stroke="#d8d8d8" stroke-width="0.900"/><rect x="0.100" y="7.100" width="3.400" height="3.300" fill="#dcdcdc"/><path d="M5.200 9.700c3.200 0 4.700-1.900 4.700-4.100S8.400 2 6.400 2.100" fill="none" stroke="#dcdcdc" stroke-width="1.400"/><path d="M4.300 2.300l2.700-2.200v4.200z" fill="#dcdcdc"/></svg>
<svg class="a" style="left:604.3px;top:73px;" width="11" height="10" viewBox="0 0 11 10"><path d="M1.200 0.500h8.600a0.800 0.800 0 0 1 0.800 0.800v4.800a0.800 0.800 0 0 1-0.800 0.800H4.600L2.300 9.300V6.900H1.200a0.800 0.800 0 0 1-0.800-0.800V1.300a0.800 0.800 0 0 1 0.800-0.800z" fill="#d0d0d0"/></svg>
<div class="a" style="left:623px;top:46.5px;width:177px;height:17px;background:#424242;"></div>
<div class="a" style="left:623px;top:46.5px;width:26.5px;height:17px;background:#535353;"></div>
<div class="a" style="left:649.5px;top:47px;width:37.2px;height:16.5px;background:#464646;"></div>
<div class="a" style="left:687.5px;top:47px;width:38.7px;height:16.5px;background:#464646;"></div>
<div class="a" style="left:727px;top:47px;width:34.2px;height:16.5px;background:#464646;"></div>
<div class="t" style="left:628.4px;top:51.00px;font-size:7.5px;font-weight:700;color:#f2f2f2;transform:scaleX(0.8370);">Color</div>
<div class="t" style="left:655.3px;top:51.00px;font-size:7.5px;font-weight:700;color:#a9a9a9;transform:scaleX(0.7715);">Swatches</div>
<div class="t" style="left:693.2px;top:51.00px;font-size:7.5px;font-weight:700;color:#a9a9a9;transform:scaleX(0.8025);">Gradients</div>
<div class="t" style="left:732.6px;top:51.00px;font-size:7.5px;font-weight:700;color:#a9a9a9;transform:scaleX(0.7996);">Patterns</div>
<div class="a" style="left:790.6px;top:53.7px;width:6px;height:4px;background:#8c8c8c;"></div>
<div class="a" style="left:623px;top:63.5px;width:177px;height:111.5px;background:#535353;"></div>
<div class="a" style="left:636px;top:78px;width:11px;height:11px;background:#ffffff;border:0.500px solid #cfcfcf;box-sizing:border-box"></div>
<div class="a" style="left:629.500px;top:72px;width:11.500px;height:11px;background:#000;border:0.800px solid #b4b4b4;box-sizing:border-box;border-radius:1px"></div>
<div class="a" style="left:651px;top:68.500px;width:117px;height:95px;background:linear-gradient(to top,#000,rgba(0,0,0,0)),linear-gradient(to right,#fff,#ff0000)"></div>
<div class="a" style="left:650px;top:160.500px;width:4px;height:4px;border:0.800px solid #707070;border-radius:50%;box-sizing:border-box"></div>
<div class="a" style="left:778px;top:68.500px;width:12.500px;height:95px;background:linear-gradient(to bottom,#ff0000 0%,#ff00ff 17%,#0000ff 33%,#00ffff 50%,#00ff00 67%,#ffff00 83%,#ff0000 100%)"></div>
<svg class="a" style="left:772.5px;top:160.5px;" width="5" height="6" viewBox="0 0 5 6"><path d="M0.500 0.500l4 2.500-4 2.500z" fill="#e8e8e8"/></svg>
<div class="a" style="left:623px;top:176.2px;width:177px;height:1.8px;background:#3f3f3f;"></div>
<div class="a" style="left:623px;top:178px;width:177px;height:17.5px;background:#424242;"></div>
<div class="a" style="left:623px;top:178px;width:41px;height:17.5px;background:#535353;"></div>
<div class="a" style="left:664px;top:178.5px;width:47.7px;height:17px;background:#464646;"></div>
<div class="a" style="left:712.5px;top:178.5px;width:34.7px;height:17px;background:#464646;"></div>
<div class="t" style="left:628.8px;top:183.00px;font-size:7.5px;font-weight:700;color:#f2f2f2;transform:scaleX(0.8246);">Properties</div>
<div class="t" style="left:670.3px;top:183.00px;font-size:7.5px;font-weight:700;color:#a9a9a9;transform:scaleX(0.8124);">Adjustments</div>
<div class="t" style="left:718px;top:183.00px;font-size:7.5px;font-weight:700;color:#a9a9a9;transform:scaleX(0.7984);">Libraries</div>
<div class="a" style="left:790.6px;top:185.7px;width:6px;height:4px;background:#8c8c8c;"></div>
<div class="a" style="left:623px;top:195.5px;width:177px;height:201.5px;background:#535353;"></div>
<div class="a" style="left:629.5px;top:200px;width:13.5px;height:13.5px;background:#3c3c3c;border-radius:1px"></div>
<svg class="a" style="left:632px;top:202px;" width="9" height="10" viewBox="0 0 9 10"><path d="M1.200 0.800h4.200l2.400 2.400v6H1.200z" fill="none" stroke="#e8e8e8" stroke-width="0.900"/><path d="M5.200 0.800v2.600h2.600" fill="none" stroke="#e8e8e8" stroke-width="0.800"/></svg>
<div class="t" style="left:648px;top:204.00px;font-size:7.5px;font-weight:400;color:#d2d2d2;transform:scaleX(0.8102);">Document</div>
<div class="a" style="left:623px;top:218px;width:177px;height:1px;background:#474747;"></div>
<svg class="a" style="left:628.5px;top:224.5px;" width="5" height="4" viewBox="0 0 5 4"><path d="M0.500 0.800l2 2 2-2" stroke="#a8a8a8" stroke-width="0.900" fill="none"/></svg>
<div class="t" style="left:637.4px;top:223.00px;font-size:7.5px;font-weight:700;color:#ececec;transform:scaleX(0.8468);">Canvas</div>
<div class="t" style="left:655.6px;top:239.00px;font-size:7.5px;font-weight:400;color:#c4c4c4;transform:scaleX(0.7048);">W</div>
<div class="a" style="left:664.5px;top:237px;width:33.5px;height:10px;background:#454545;border-radius:1px"></div>
<div class="t" style="left:667.5px;top:239.00px;font-size:7.5px;font-weight:400;color:#e4e4e4;transform:scaleX(0.8239);">2100 px</div>
<div class="t" style="left:707.2px;top:239.00px;font-size:7.5px;font-weight:400;color:#bcbcbc;transform:scaleX(0.8174);">X</div>
<div class="a" style="left:716px;top:237px;width:32px;height:10px;background:#4b4b4b;border-radius:1px"></div>
<div class="t" style="left:718.5px;top:239.00px;font-size:7.5px;font-weight:400;color:#6a6a6a;transform:scaleX(0.8106);">0 px</div>
<div class="t" style="left:657.3px;top:254.00px;font-size:7.5px;font-weight:400;color:#c4c4c4;transform:scaleX(0.6824);">H</div>
<div class="a" style="left:664.5px;top:252px;width:33.5px;height:10px;background:#454545;border-radius:1px"></div>
<div class="t" style="left:667.5px;top:254.00px;font-size:7.5px;font-weight:400;color:#e4e4e4;transform:scaleX(0.8239);">1500 px</div>
<div class="t" style="left:707.2px;top:254.00px;font-size:7.5px;font-weight:400;color:#bcbcbc;transform:scaleX(0.8174);">Y</div>
<div class="a" style="left:716px;top:252px;width:32px;height:10px;background:#4b4b4b;border-radius:1px"></div>
<div class="t" style="left:718.5px;top:254.00px;font-size:7.5px;font-weight:400;color:#6a6a6a;transform:scaleX(0.8106);">0 px</div>
<svg class="a" style="left:633.5px;top:244.5px;" width="7" height="10" viewBox="0 0 7 10"><rect x="1.400" y="0.800" width="4" height="4.400" rx="2" fill="none" stroke="#d4d4d4" stroke-width="1"/><rect x="1.400" y="4.400" width="4" height="4.400" rx="2" fill="none" stroke="#d4d4d4" stroke-width="1"/></svg>
<svg class="a" style="left:668px;top:271.5px;" width="11" height="12" viewBox="0 0 11 12"><rect x="0.700" y="0.700" width="9.200" height="10.400" fill="none" stroke="#d6d6d6" stroke-width="1"/><circle cx="5.300" cy="3.800" r="1.500" fill="#e2e2e2"/><path d="M2.600 10.800V7.500a1.500 1.500 0 0 1 1.500-1.500h2.400a1.500 1.500 0 0 1 1.500 1.500v3.300z" fill="#e2e2e2"/></svg>
<div class="a" style="left:681.5px;top:270.5px;width:14.5px;height:14px;background:#2f2f2f;border-radius:1px"></div>
<svg class="a" style="left:683.5px;top:273px;" width="11" height="9" viewBox="0 0 11 9"><rect x="0.700" y="0.700" width="9.600" height="7.400" fill="none" stroke="#e6e6e6" stroke-width="1"/><circle cx="5.500" cy="3.300" r="1.300" fill="#ececec"/><path d="M2.800 7.800V6.600a1.400 1.400 0 0 1 1.400-1.400h2.600a1.400 1.400 0 0 1 1.400 1.400v1.200z" fill="#ececec"/></svg>
<div class="t" style="left:665.2px;top:292.00px;font-size:7.5px;font-weight:400;color:#c8c8c8;transform:scaleX(0.8326);">Resolution: 300 pixels/inch</div>
<div class="t" style="left:645.2px;top:308.00px;font-size:7.5px;font-weight:400;color:#c4c4c4;transform:scaleX(0.8206);">Mode</div>
<div class="a" style="left:666px;top:307px;width:82px;height:10.5px;background:#454545;border-radius:1px"></div>
<div class="t" style="left:670.8px;top:309.00px;font-size:7.5px;font-weight:400;color:#e4e4e4;transform:scaleX(0.7666);">RGB Color</div>
<svg class="a" style="left:741.5px;top:310.5px;" width="5" height="4" viewBox="0 0 5 4"><path d="M0.500 0.800l2 2 2-2" stroke="#a8a8a8" stroke-width="0.900" fill="none"/></svg>
<div class="a" style="left:666px;top:322.5px;width:82px;height:10.5px;background:#454545;border-radius:1px"></div>
<div class="t" style="left:670.8px;top:324.00px;font-size:7.5px;font-weight:400;color:#e4e4e4;transform:scaleX(0.8077);">8 Bits/Channel</div>
<svg class="a" style="left:741.5px;top:326px;" width="5" height="4" viewBox="0 0 5 4"><path d="M0.500 0.800l2 2 2-2" stroke="#a8a8a8" stroke-width="0.900" fill="none"/></svg>
<div class="t" style="left:653.4px;top:341.00px;font-size:7.5px;font-weight:400;color:#c4c4c4;transform:scaleX(0.6879);">Fill</div>
<div class="a" style="left:666px;top:339px;width:11px;height:10.5px;background:#ffffff;"></div>
<div class="a" style="left:680px;top:339.5px;width:68px;height:11px;background:#454545;border-radius:1px"></div>
<div class="t" style="left:684.5px;top:342.00px;font-size:7.5px;font-weight:400;color:#e4e4e4;transform:scaleX(0.8241);">White</div>
<svg class="a" style="left:741.5px;top:343.5px;" width="5" height="4" viewBox="0 0 5 4"><path d="M0.500 0.800l2 2 2-2" stroke="#a8a8a8" stroke-width="0.900" fill="none"/></svg>
<div class="a" style="left:623px;top:356.5px;width:169px;height:1px;background:#474747;"></div>
<svg class="a" style="left:628.5px;top:364px;" width="5" height="4" viewBox="0 0 5 4"><path d="M0.500 0.800l2 2 2-2" stroke="#a8a8a8" stroke-width="0.900" fill="none"/></svg>
<div class="t" style="left:636.6px;top:362.00px;font-size:7.5px;font-weight:700;color:#ececec;transform:scaleX(0.8835);">Rulers &amp; Grids</div>
<svg class="a" style="left:631.5px;top:377.5px;" width="12" height="8" viewBox="0 0 12 8"><rect x="0.500" y="0.800" width="11" height="3" fill="#dcdcdc"/><rect x="0.500" y="3.800" width="2.600" height="3" fill="#dcdcdc"/><path d="M3 0.800v1.600M5 0.800v1.600M7 0.800v1.600M9 0.800v1.600" stroke="#535353" stroke-width="0.600"/></svg>
<svg class="a" style="left:652px;top:377.5px;" width="12" height="8" viewBox="0 0 12 8"><rect x="0.800" y="1.500" width="10.200" height="5" fill="none" stroke="#dcdcdc" stroke-width="0.900"/><path d="M4.200 0.300v7.200M7.600 0.300v7.200M0.800 4h10.200" stroke="#dcdcdc" stroke-width="0.800"/></svg>
<svg class="a" style="left:672.5px;top:377.5px;" width="12" height="8" viewBox="0 0 12 8"><rect x="0.800" y="1.200" width="10.200" height="5.600" fill="none" stroke="#dcdcdc" stroke-width="0.900" stroke-dasharray="1.600 0.800"/><path d="M2.500 5.500c1.200-2.600 2.500-2.600 3.500-0.600s2.300 1 3.300-1.400" fill="none" stroke="#dcdcdc" stroke-width="0.800"/></svg>
<div class="a" style="left:791.5px;top:219px;width:8.5px;height:167px;background:#4c4c4c;"></div>
<div class="a" style="left:792.5px;top:228.5px;width:6.5px;height:85.5px;background:#666666;"></div>
<svg class="a" style="left:793.5px;top:221.5px;" width="5" height="4" viewBox="0 0 5 4"><path d="M0.500 3.200l2-2 2 2" stroke="#8a8a8a" stroke-width="0.900" fill="none"/></svg>
<svg class="a" style="left:793.5px;top:377.5px;" width="5" height="4" viewBox="0 0 5 4"><path d="M0.500 0.800l2 2 2-2" stroke="#8a8a8a" stroke-width="0.900" fill="none"/></svg>
<div class="a" style="left:623px;top:397.5px;width:177px;height:2.5px;background:#404040;"></div>
<div class="a" style="left:623px;top:400px;width:177px;height:20px;background:#424242;"></div>
<div class="a" style="left:623px;top:400px;width:30.5px;height:20px;background:#535353;"></div>
<div class="a" style="left:653.5px;top:400.5px;width:35.7px;height:19.5px;background:#464646;"></div>
<div class="a" style="left:690px;top:400.5px;width:26.2px;height:19.5px;background:#464646;"></div>
<div class="t" style="left:629px;top:406.00px;font-size:7.5px;font-weight:700;color:#f2f2f2;transform:scaleX(0.7566);">Layers</div>
<div class="t" style="left:658.2px;top:406.00px;font-size:7.5px;font-weight:700;color:#a9a9a9;transform:scaleX(0.7848);">Channels</div>
<div class="t" style="left:695.9px;top:406.00px;font-size:7.5px;font-weight:700;color:#a9a9a9;transform:scaleX(0.7535);">Paths</div>
<div class="a" style="left:791px;top:408.7px;width:6px;height:4px;background:#8c8c8c;"></div>
<div class="a" style="left:0px;top:419.4px;width:800px;height:3.6px;background:#1e2f3d;background:linear-gradient(#34465a,#182a3c)"></div>
<div class="a" style="left:772px;top:418.2px;width:20px;height:2.6px;background:rgba(22,26,32,0.6);border-radius:1px"></div>
</div></body></html>
